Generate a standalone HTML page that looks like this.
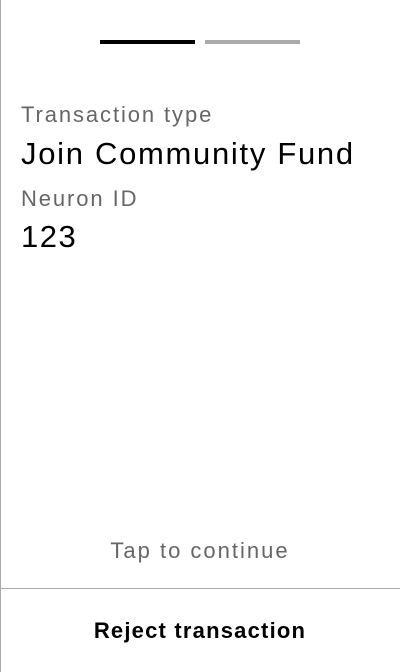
<!DOCTYPE html>
<html><head><style>
html,body{margin:0;padding:0;width:400px;height:672px;background:#fff;overflow:hidden;font-family:"Liberation Sans",sans-serif}
.b{position:absolute;left:0;top:0;width:1px;height:672px;background:#aaa}
.t{position:absolute;white-space:nowrap;line-height:1}
</style></head><body>
<div class="b"></div>
<div style="position:absolute;left:100px;top:40px;width:95px;height:4px;background:#000"></div>
<div style="position:absolute;left:205px;top:40px;width:95px;height:4px;background:#aaa"></div>
<div class="t" style="left:21px;top:104px;font-size:22px;letter-spacing:1.9px;color:#666">Transaction type</div>
<div class="t" style="left:21px;top:138px;font-size:31px;letter-spacing:1.7px;color:#000">Join Community Fund</div>
<div class="t" style="left:21px;top:188px;font-size:22px;letter-spacing:1.9px;color:#666">Neuron ID</div>
<div class="t" style="left:21px;top:221px;font-size:31px;letter-spacing:1.5px;color:#000">123</div>
<div class="t" style="left:0;width:400px;text-align:center;top:540px;font-size:22px;letter-spacing:2px;color:#666">Tap to continue</div>
<div style="position:absolute;left:0;top:588px;width:400px;height:1px;background:#aaa"></div>
<div class="t" style="left:0;width:400px;text-align:center;top:620px;font-size:22px;letter-spacing:1.2px;font-weight:bold;color:#000">Reject transaction</div>
</body></html>
